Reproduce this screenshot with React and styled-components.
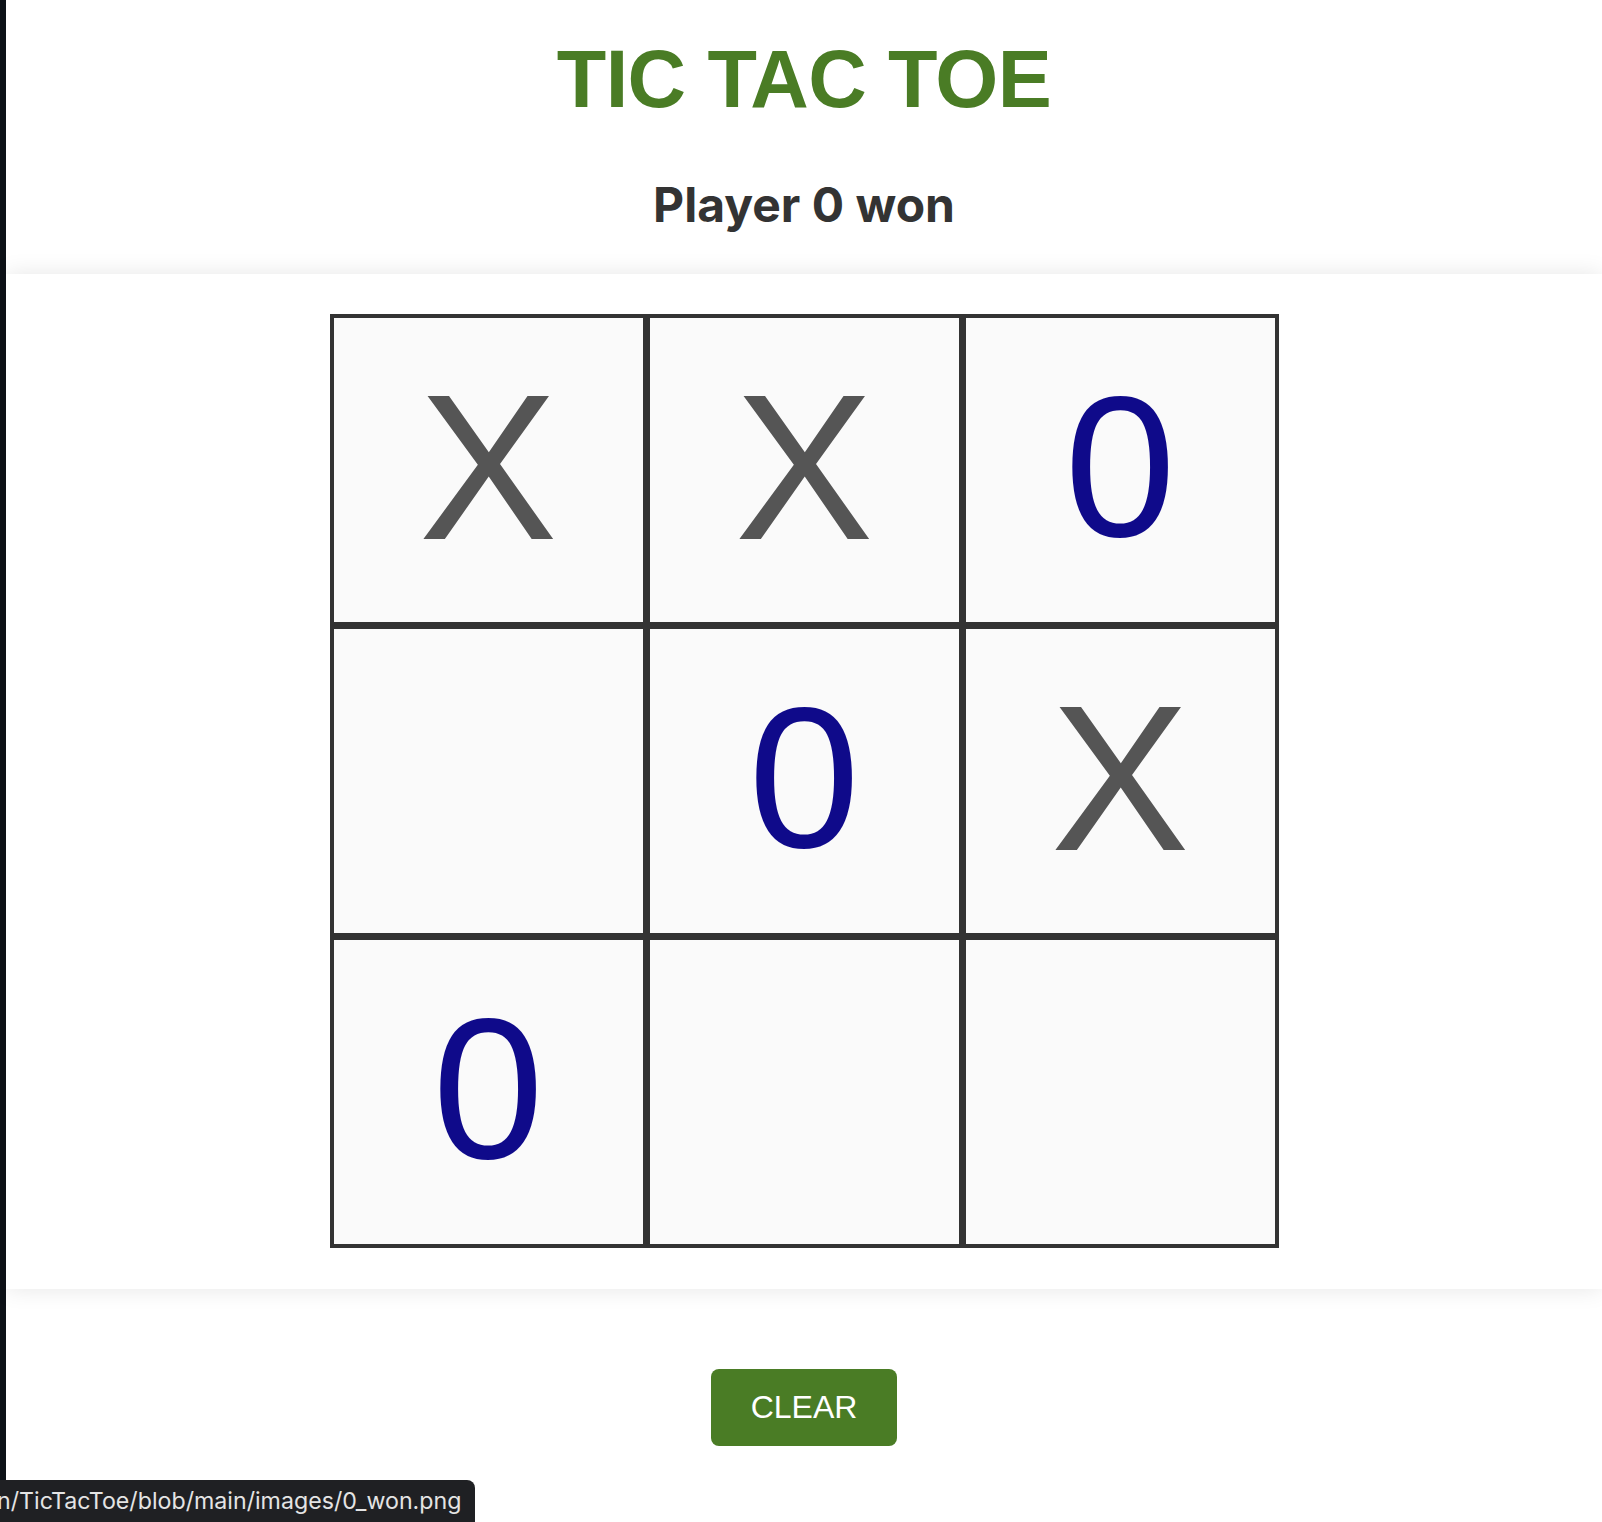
import React from 'react'
import styled, { createGlobalStyle } from 'styled-components'

const GlobalStyle = createGlobalStyle`
  body {
    margin: 0;
    background: #ffffff;
    font-family: 'Liberation Sans', Arial, sans-serif;
  }
`

const Shell = styled.div`
  display: flex;
  min-height: 100vh;
`

const EdgeStrip = styled.div`
  width: 6px;
  flex-shrink: 0;
  background: #0d1117;
`

const Main = styled.main`
  flex: 1;
  background: #ffffff;
`

const Header = styled.header`
  display: flex;
  flex-direction: column;
  align-items: center;
  padding: 39px 0 45px;
  background: #ffffff;
`

const Title = styled.h1`
  margin: 0;
  font-family: 'Liberation Sans', Arial, sans-serif;
  font-weight: 700;
  font-size: 81px;
  line-height: 81px;
  letter-spacing: -0.6px;
  color: #4a7c25;
`

const Status = styled.h2`
  margin: 61px 0 0;
  font-family: Inter, 'Noto Sans', sans-serif;
  font-weight: 700;
  font-size: 48px;
  line-height: 48px;
  color: #333333;
`

const BoardSection = styled.section`
  display: flex;
  justify-content: center;
  padding: 40px 0 41px;
  background: #ffffff;
  box-shadow: 0 0 22px rgba(0, 0, 0, 0.1);
`

const Board = styled.div`
  display: grid;
  grid-template-columns: repeat(3, 315px);
  grid-auto-rows: 310px;
  gap: 1px;
  padding: 1px;
  background: #333333;
`

const Cell = styled.button`
  display: flex;
  align-items: center;
  justify-content: center;
  margin: 0;
  padding: 0 0 7px;
  border: 3px solid #333333;
  background: #fafafa;
  font-family: 'Liberation Sans', Arial, sans-serif;
  font-size: ${(props) => (props.$mark === 'X' ? '208px' : '200px')};
  line-height: 1;
  color: ${(props) => (props.$mark === 'X' ? '#555555' : '#0f0a8a')};
  cursor: pointer;
`

const Footer = styled.footer`
  display: flex;
  justify-content: center;
  padding: 80px 0 40px;
`

const ClearButton = styled.button`
  width: 186px;
  height: 77px;
  border: none;
  border-radius: 8px;
  background: #4a7c25;
  color: #ffffff;
  font-family: 'Liberation Sans', Arial, sans-serif;
  font-size: 32px;
  cursor: pointer;
`

const LinkPreview = styled.div`
  position: fixed;
  left: 0;
  bottom: 0;
  height: 42px;
  display: flex;
  align-items: center;
  padding: 0 14px 0 0;
  background: #1f2023;
  border-top-right-radius: 8px;
  overflow: hidden;
  font-family: Inter, 'Noto Sans', sans-serif;
  font-size: 23.2px;
  color: #e4e4e4;
  white-space: nowrap;

  & span {
    margin-left: -3px;
  }
`

const cells = ['X', 'X', '0', '', '0', 'X', '0', '', '']

export default function App() {
  return (
    <>
      <GlobalStyle />
      <Shell>
        <EdgeStrip />
        <Main>
          <Header>
            <Title>TIC TAC TOE</Title>
            <Status>Player 0 won</Status>
          </Header>
          <BoardSection>
            <Board>
              {cells.map((mark, i) => (
                <Cell key={i} $mark={mark}>
                  {mark}
                </Cell>
              ))}
            </Board>
          </BoardSection>
          <Footer>
            <ClearButton>CLEAR</ClearButton>
          </Footer>
        </Main>
      </Shell>
      <LinkPreview>
        <span>n/TicTacToe/blob/main/images/0_won.png</span>
      </LinkPreview>
    </>
  )
}
